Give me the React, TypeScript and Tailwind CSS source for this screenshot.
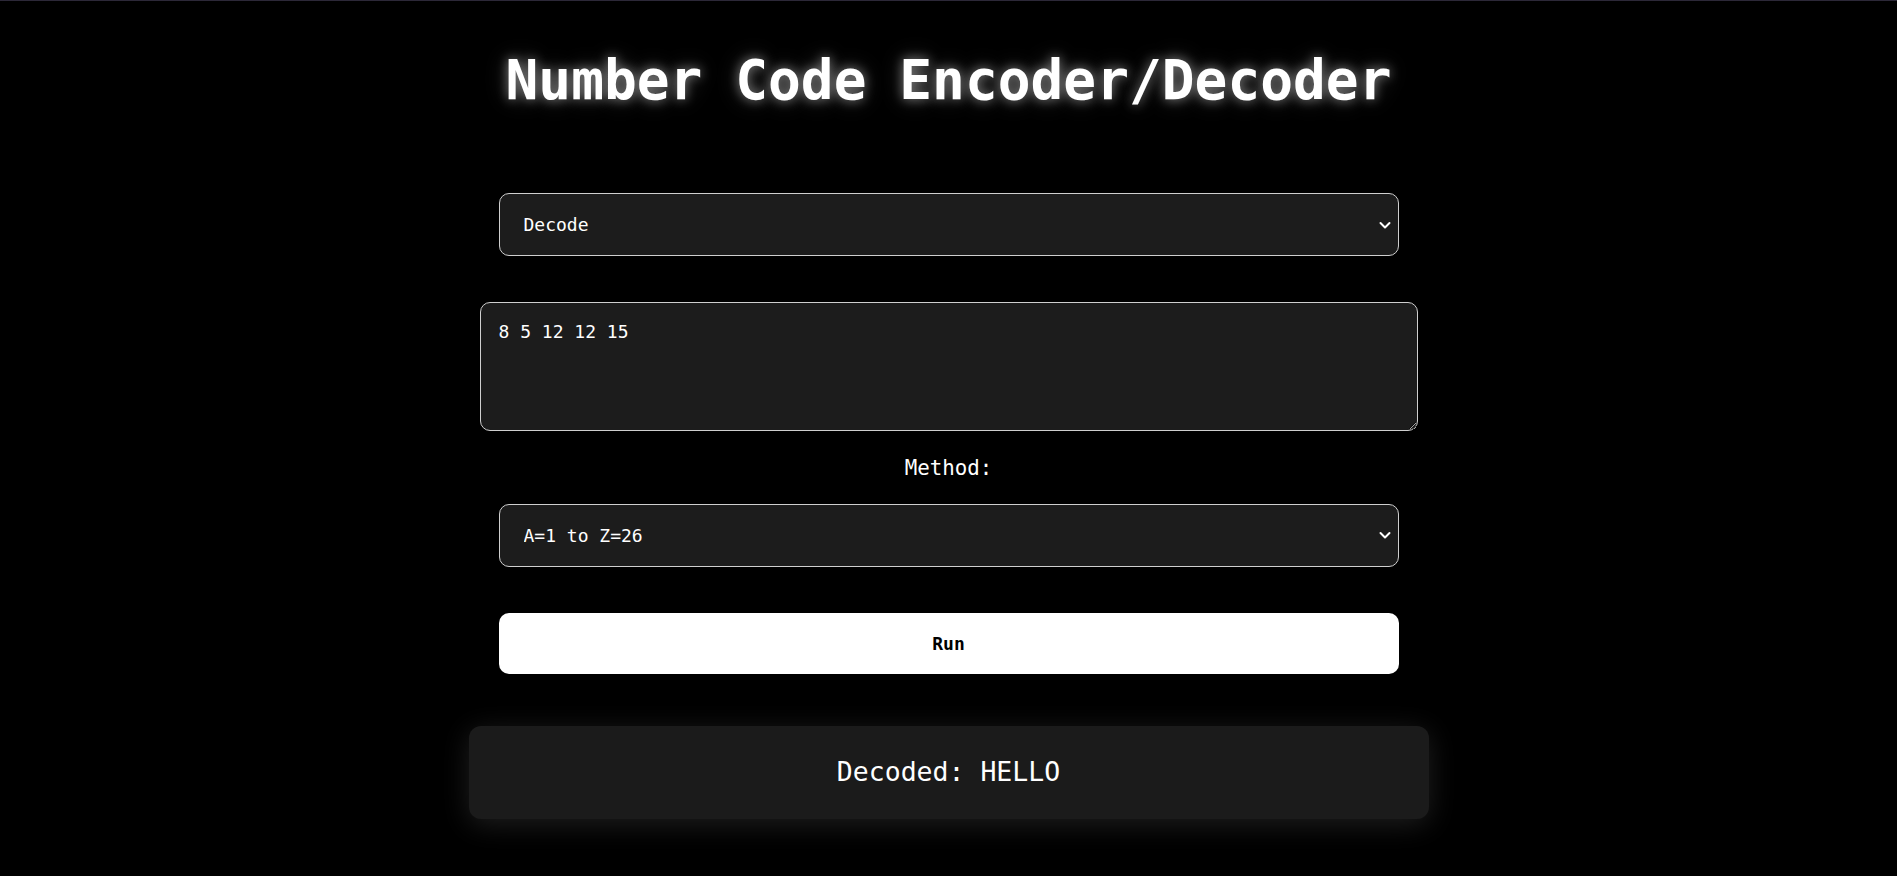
import { useState } from "react";

const mono = { fontFamily: '"DejaVu Sans Mono", "Liberation Mono", monospace' };

function decode(text: string) {
  return text
    .trim()
    .split(/\s+/)
    .filter(Boolean)
    .map((n) => {
      const v = parseInt(n, 10);
      return v >= 1 && v <= 26 ? String.fromCharCode(64 + v) : "?";
    })
    .join("");
}

function Chevron() {
  return (
    <svg
      className="pointer-events-none absolute right-[7px] top-1/2 -translate-y-1/2"
      width="14"
      height="14"
      viewBox="0 0 14 14"
      fill="none"
      aria-hidden="true"
    >
      <path d="M2.5 5l4.5 4.5 4.5-4.5" stroke="#ffffff" strokeWidth="2" strokeLinecap="round" strokeLinejoin="round" />
    </svg>
  );
}

export default function App() {
  const [mode, setMode] = useState("decode");
  const [input, setInput] = useState("8 5 12 12 15");
  const [method, setMethod] = useState("a1");
  const [result, setResult] = useState("Decoded: HELLO");

  const run = () => {
    if (mode === "decode") {
      setResult("Decoded: " + decode(input));
    } else {
      const out = input
        .toUpperCase()
        .replace(/[^A-Z]/g, "")
        .split("")
        .map((c) => c.charCodeAt(0) - 64)
        .join(" ");
      setResult("Encoded: " + out);
    }
  };

  return (
    <div className="min-h-screen bg-black text-white border-t border-[#2c2838]" style={mono}>
      <main className="mx-auto flex w-[960px] flex-col items-center pt-[48px] pb-10">
        <h1
          className="text-[54.5px] font-bold leading-[1.164] text-white"
          style={{ textShadow: "0 0 12px rgba(255,255,255,0.5), 0 0 24px rgba(255,255,255,0.2)" }}
        >
          Number Code Encoder/Decoder
        </h1>

        <div className="relative mt-[81px] w-[900px]">
          <select
            value={mode}
            onChange={(e) => setMode(e.target.value)}
            className="h-[63px] w-full appearance-none rounded-[10px] border border-[#cfcfcf] bg-[#1c1c1c] pl-[24px] text-[18px] text-white outline-none"
            style={mono}
          >
            <option value="encode">Encode</option>
            <option value="decode">Decode</option>
          </select>
          <Chevron />
        </div>

        <textarea
          value={input}
          onChange={(e) => setInput(e.target.value)}
          className="mt-[46px] h-[129px] w-[938px] rounded-[10px] border border-[#cfcfcf] bg-[#1c1c1c] px-[18px] py-[19px] text-[18px] leading-[1.164] text-white outline-none"
          style={mono}
        />

        <label className="mt-[25px] text-[20.8px] leading-[1.164] text-white">Method:</label>

        <div className="relative mt-[23px] w-[900px]">
          <select
            value={method}
            onChange={(e) => setMethod(e.target.value)}
            className="h-[63px] w-full appearance-none rounded-[10px] border border-[#cfcfcf] bg-[#1c1c1c] pl-[24px] text-[18px] text-white outline-none"
            style={mono}
          >
            <option value="a1">A=1 to Z=26</option>
            <option value="a0">A=0 to Z=25</option>
          </select>
          <Chevron />
        </div>

        <button
          type="button"
          onClick={run}
          className="mt-[46px] h-[61px] w-[900px] rounded-[10px] bg-white text-[18px] font-bold text-black"
          style={mono}
        >
          Run
        </button>

        <section className="mt-[52px] flex h-[93px] w-[960px] items-center justify-center rounded-[12px] bg-[#1b1b1b] shadow-[0_5px_28px_rgba(255,255,255,0.12)]">
          <p className="text-[26.5px] text-white">{result}</p>
        </section>
      </main>
    </div>
  );
}
